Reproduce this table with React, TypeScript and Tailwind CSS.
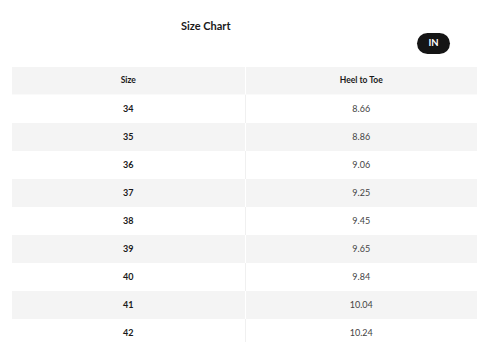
import React from 'react';

const rows: [string, string][] = [
  ['34', '8.66'],
  ['35', '8.86'],
  ['36', '9.06'],
  ['37', '9.25'],
  ['38', '9.45'],
  ['39', '9.65'],
  ['40', '9.84'],
  ['41', '10.04'],
  ['42', '10.24'],
];

const App: React.FC = () => {
  return (
    <div className="w-[480px] h-[342px] overflow-hidden bg-white text-[#1a1a1a]" style={{ fontFamily: 'Lato, "Open Sans", sans-serif' }}>
      <div className="pt-[19px] pl-[181px] text-[11px] leading-[14px] font-bold">Size Chart</div>
      <div className="flex justify-end pr-[30px]">
        <button className="w-[33px] h-[21px] rounded-full bg-[#151515] text-white text-[9.5px] font-bold flex items-center justify-center">
          IN
        </button>
      </div>
      <div className="mt-[13px] mx-[12px] w-[465px]">
        <div className="grid grid-cols-2 h-[28px] bg-[#f4f4f4] text-[8.5px] font-bold border-b border-[#fafafa]">
          <div className="flex items-center justify-center">Size</div>
          <div className="flex items-center justify-center border-l border-white">Heel to Toe</div>
        </div>
        {rows.map(([size, len], i) => {
          const shaded = i % 2 === 1;
          return (
            <div key={size} className={`grid grid-cols-2 h-[28px] text-[9px] ${shaded ? 'bg-[#f4f4f4]' : 'bg-white'}`}>
              <div className="flex items-center justify-center font-bold">{size}</div>
              <div className={`flex items-center justify-center text-[#444] border-l ${shaded ? 'border-white' : 'border-[#f0f0f0]'}`}>
                {len}
              </div>
            </div>
          );
        })}
      </div>
    </div>
  );
};

export default App;
